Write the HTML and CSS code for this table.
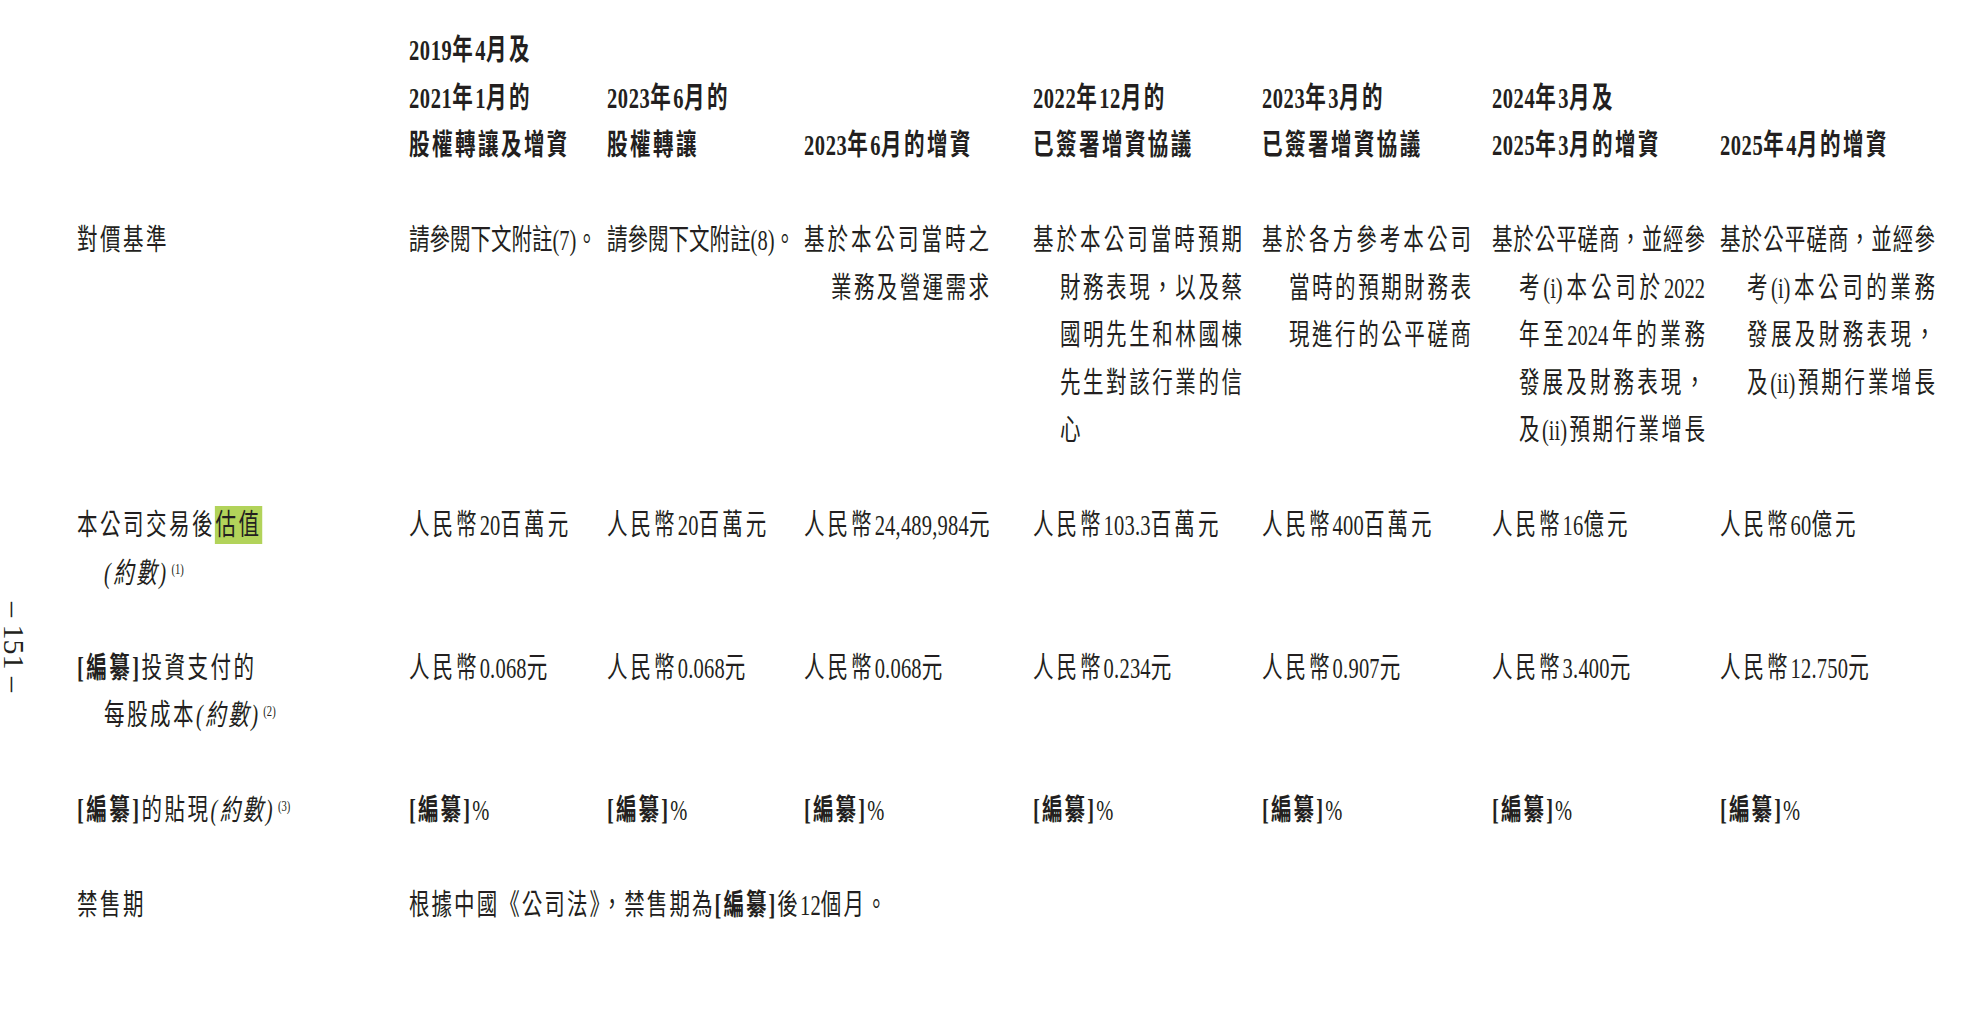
FILE: index.html
```html
<!DOCTYPE html>
<html lang="zh-Hant">
<head>
<meta charset="utf-8">
<title>151</title>
<link rel="stylesheet" href="styles.css">
</head>
<body>
<div class="folio">– 151 –</div>
<div class="sheet">
  <div class="hd"></div>
  <div class="hd"><div><span class="d">2019</span>年<span class="d">4</span>月及</div><div><span class="d">2021</span>年<span class="d">1</span>月的</div><div>股權轉讓及增資</div></div>
  <div class="hd"><div><span class="d">2023</span>年<span class="d">6</span>月的</div><div>股權轉讓</div></div>
  <div class="hd"><div><span class="d">2023</span>年<span class="d">6</span>月的增資</div></div>
  <div class="hd"><div><span class="d">2022</span>年<span class="d">12</span>月的</div><div>已簽署增資協議</div></div>
  <div class="hd"><div><span class="d">2023</span>年<span class="d">3</span>月的</div><div>已簽署增資協議</div></div>
  <div class="hd"><div><span class="d">2024</span>年<span class="d">3</span>月及</div><div><span class="d">2025</span>年<span class="d">3</span>月的增資</div></div>
  <div class="hd"><div><span class="d">2025</span>年<span class="d">4</span>月的增資</div></div>

  <div class="lab"><div class="l">對價基準</div></div>
  <div class="val tight">請參閱下文附註(7)。</div>
  <div class="val tight">請參閱下文附註(8)。</div>
  <div class="basis basis-a"><div class="l">基於本公司當時之</div><div class="l">業務及營運需求</div></div>
  <div class="basis basis-b"><div class="l">基於本公司當時預期</div><div class="l">財務表現，以及蔡</div><div class="l">國明先生和林國棟</div><div class="l">先生對該行業的信</div><div class="l short">心</div></div>
  <div class="basis basis-b"><div class="l">基於各方參考本公司</div><div class="l">當時的預期財務表</div><div class="l">現進行的公平磋商</div></div>
  <div class="basis basis-c"><div class="l">基於公平磋商，並經參</div><div class="l">考(i)本公司於2022</div><div class="l">年至2024年的業務</div><div class="l">發展及財務表現，</div><div class="l">及(ii)預期行業增長</div></div>
  <div class="basis basis-d"><div class="l">基於公平磋商，並經參</div><div class="l">考(i)本公司的業務</div><div class="l">發展及財務表現，</div><div class="l">及(ii)預期行業增長</div></div>

  <div class="lab"><div class="l">本公司交易後<mark class="hl">估值</mark></div><div class="l ind"><i class="it">(約數)</i><span class="sup">(1)</span></div></div>
  <div class="val">人民幣<span class="n">20</span>百萬元</div>
  <div class="val">人民幣<span class="n">20</span>百萬元</div>
  <div class="val">人民幣<span class="n">24,489,984</span>元</div>
  <div class="val">人民幣<span class="n">103.3</span>百萬元</div>
  <div class="val">人民幣<span class="n">400</span>百萬元</div>
  <div class="val">人民幣<span class="n">16</span>億元</div>
  <div class="val">人民幣<span class="n">60</span>億元</div>

  <div class="lab"><div class="l"><b class="red">[編纂]</b>投資支付的</div><div class="l ind">每股成本<i class="it">(約數)</i><span class="sup">(2)</span></div></div>
  <div class="val">人民幣<span class="n">0.068</span>元</div>
  <div class="val">人民幣<span class="n">0.068</span>元</div>
  <div class="val">人民幣<span class="n">0.068</span>元</div>
  <div class="val">人民幣<span class="n">0.234</span>元</div>
  <div class="val">人民幣<span class="n">0.907</span>元</div>
  <div class="val">人民幣<span class="n">3.400</span>元</div>
  <div class="val">人民幣<span class="n">12.750</span>元</div>

  <div class="lab"><div class="l"><b class="red">[編纂]</b>的貼現<i class="it">(約數)</i><span class="sup">(3)</span></div></div>
  <div class="val pct"><b class="red">[編纂]</b>%</div>
  <div class="val pct"><b class="red">[編纂]</b>%</div>
  <div class="val pct"><b class="red">[編纂]</b>%</div>
  <div class="val pct"><b class="red">[編纂]</b>%</div>
  <div class="val pct"><b class="red">[編纂]</b>%</div>
  <div class="val pct"><b class="red">[編纂]</b>%</div>
  <div class="val pct"><b class="red">[編纂]</b>%</div>

  <div class="lab"><div class="l">禁售期</div></div>
  <div class="val lockup">根據中國《公司法》，禁售期為<b class="red">[編纂]</b>後<span class="n">12</span>個月。</div>
</div>
</body>
</html>
```

FILE: styles.css
```css
html {
  overflow: hidden;
}

html, body {
  margin: 0;
  padding: 0;
  background: #ffffff;
}

body {
  width: 1966px;
  height: 1020px;
  overflow: hidden;
  display: flex;
  align-items: flex-start;
  color: #231f20;
  font-family: "Liberation Serif", "Noto Sans CJK TC", serif;
}

.folio {
  flex: none;
  writing-mode: vertical-rl;
  font-size: 30px;
  line-height: 28px;
  width: 28px;
  margin-top: 602px;
  white-space: nowrap;
}

.sheet {
  flex: none;
  width: 1860px;
  margin-left: 49px;
  padding-top: 27px;
  display: grid;
  grid-template-columns: 469.6px 280.1px 278.6px 323.9px 323.9px 325.3px 322.5px 311.2px;
  row-gap: 47.5px;
  transform: scaleX(0.707);
  transform-origin: 0 0;
  font-size: 29px;
  line-height: 47.5px;
  white-space: nowrap;
}

.hd {
  align-self: end;
  font-weight: 700;
  letter-spacing: 3.5px;
}

.hd .d {
  letter-spacing: 0.8px;
}

.lab {
  letter-spacing: 3.5px;
}

.lab .ind {
  padding-left: 38.2px;
}

.val {
  letter-spacing: 4.3px;
}

.val .n {
  letter-spacing: 0.3px;
}

.val.tight {
  letter-spacing: 0;
}

.val.pct {
  letter-spacing: 3px;
}

.val.lockup {
  grid-column: 2 / -1;
  letter-spacing: 2.9px;
}

.basis {
  box-sizing: border-box;
  padding-left: 38.2px;
  letter-spacing: 0;
}

.basis .l {
  text-align: justify;
  text-align-last: justify;
}

.basis .l:first-child {
  margin-left: -38.2px;
}

.basis .l.short {
  text-align-last: auto;
}

.basis-a { width: 261.7px; }
.basis-b { width: 295.6px; }
.basis-c { width: 301.3px; }
.basis-d { width: 304.1px; }

.red {
  font-weight: 700;
}

.it {
  font-style: italic;
}

.sup {
  font-size: 15px;
  vertical-align: 9px;
  line-height: 0;
  margin-left: 4px;
  letter-spacing: 0;
}

.hl {
  background: #b2d35a;
  color: inherit;
  padding: 3px 1px;
}
```
